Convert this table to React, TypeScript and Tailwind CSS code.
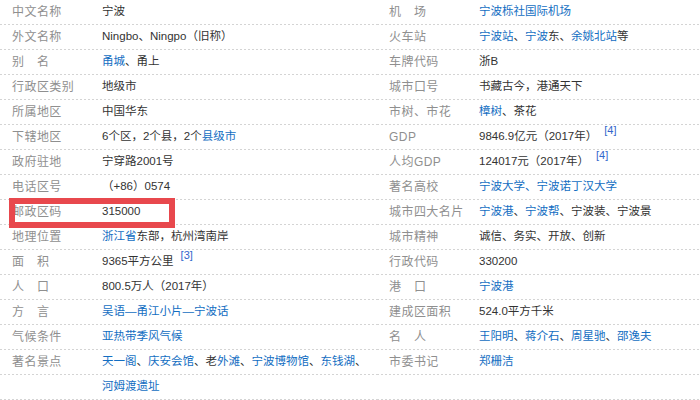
import React from "react";

type Seg = { t: string; l?: boolean };
type Item = { label: string; value: Seg[]; sup?: string };

const L = (t: string): Seg => ({ t, l: true });
const T = (t: string): Seg => ({ t });

const left: Item[] = [
  { label: "中文名称", value: [T("宁波")] },
  { label: "外文名称", value: [T("Ningbo、Ningpo（旧称）")] },
  { label: "别　名", value: [L("甬城"), T("、甬上")] },
  { label: "行政区类别", value: [T("地级市")] },
  { label: "所属地区", value: [T("中国华东")] },
  { label: "下辖地区", value: [T("6个区，2个县，2个"), L("县级市")] },
  { label: "政府驻地", value: [T("宁穿路2001号")] },
  { label: "电话区号", value: [T("（+86）0574")] },
  { label: "邮政区码", value: [T("315000")] },
  { label: "地理位置", value: [L("浙江省"), T("东部，杭州湾南岸")] },
  { label: "面　积", value: [T("9365平方公里")], sup: "[3]" },
  { label: "人　口", value: [T("800.5万人（2017年）")] },
  { label: "方　言", value: [L("吴语—甬江小片—宁波话")] },
  { label: "气候条件", value: [L("亚热带季风气候")] },
  {
    label: "著名景点",
    value: [
      L("天一阁"),
      T("、"),
      L("庆安会馆"),
      T("、老"),
      L("外滩"),
      T("、"),
      L("宁波博物馆"),
      T("、"),
      L("东钱湖"),
      T("、"),
    ],
  },
  { label: "", value: [L("河姆渡遗址")] },
];

const right: Item[] = [
  { label: "机　场", value: [L("宁波栎社国际机场")] },
  {
    label: "火车站",
    value: [L("宁波站"), T("、"), L("宁波"), T("东、"), L("余姚北站"), T("等")],
  },
  { label: "车牌代码", value: [T("浙B")] },
  { label: "城市口号", value: [T("书藏古今，港通天下")] },
  { label: "市树、市花", value: [L("樟树"), T("、茶花")] },
  { label: "GDP", value: [T("9846.9亿元（2017年）")], sup: "[4]" },
  { label: "人均GDP", value: [T("124017元（2017年）")], sup: "[4]" },
  { label: "著名高校", value: [L("宁波大学、宁波诺丁汉大学")] },
  {
    label: "城市四大名片",
    value: [L("宁波港"), T("、"), L("宁波帮"), T("、宁波装、宁波景")],
  },
  { label: "城市精神", value: [T("诚信、务实、开放、创新")] },
  { label: "行政代码", value: [T("330200")] },
  { label: "港　口", value: [L("宁波港")] },
  { label: "建成区面积", value: [T("524.0平方千米")] },
  {
    label: "名　人",
    value: [L("王阳明"), T("、"), L("蒋介石"), T("、"), L("周星驰"), T("、"), L("邵逸夫")],
  },
  { label: "市委书记", value: [L("郑栅洁")] },
  { label: "", value: [] },
];

function Row({ item }: { item: Item }) {
  return (
    <div className="flex h-[25px] items-center pb-px bg-[repeating-linear-gradient(90deg,#d4d4d4_0_2px,transparent_2px_4px)] bg-[length:100%_1px] bg-bottom bg-no-repeat">
      <div className="w-[102px] shrink-0 pl-[12px] text-[12px] tracking-[0.45px] text-[#8f8f8f] whitespace-nowrap">
        {item.label}
      </div>
      <div className="text-[11.5px] text-[#333] whitespace-nowrap">
        {item.value.map((s, i) =>
          s.l ? (
            <span key={i} className="text-[#136ec2]">
              {s.t}
            </span>
          ) : (
            <span key={i}>{s.t}</span>
          )
        )}
        {item.sup && (
          <span className="relative -top-[6px] ml-[7px] text-[11px] text-[#3366cc]">
            {item.sup}
          </span>
        )}
      </div>
    </div>
  );
}

export default function App() {
  return (
    <div
      className="relative flex h-[400px] w-[700px] overflow-hidden bg-white"
      style={{ fontFamily: '"Liberation Sans", Arial, "Noto Sans CJK SC", sans-serif' }}
    >
      <div className="flex w-[377px] shrink-0 flex-col">
        {left.map((it, i) => (
          <Row key={i} item={it} />
        ))}
      </div>
      <div className="flex flex-1 flex-col">
        {right.map((it, i) => (
          <Row key={i} item={it} />
        ))}
      </div>
      <div className="pointer-events-none absolute left-[9px] top-[198px] h-[30px] w-[166px] border-[6px] border-[#e8484d]" />
    </div>
  );
}
